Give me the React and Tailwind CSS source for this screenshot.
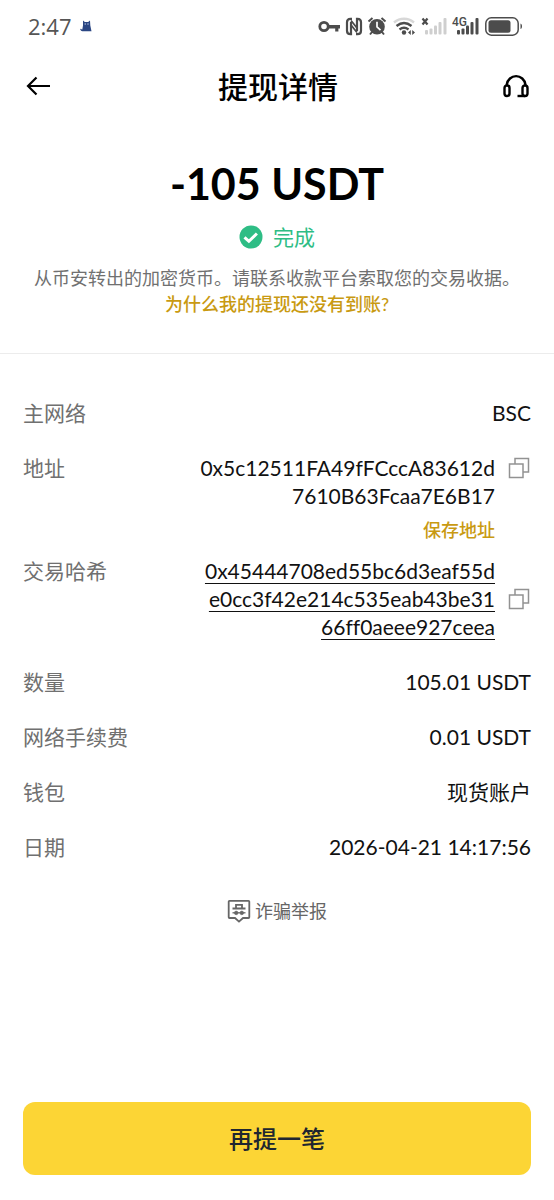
import { useState } from "react";

const details = {
	amount: "-105 USDT",
	network: "BSC",
	address: ["0x5c12511FA49fFCccA83612d", "7610B63Fcaa7E6B17"],
	hash: [
		"0x45444708ed55bc6d3eaf55d",
		"e0cc3f42e214c535eab43be31",
		"66ff0aeee927ceea",
	],
	quantity: "105.01 USDT",
	fee: "0.01 USDT",
	wallet: "现货账户",
	date: "2026-04-21 14:17:56",
};

function CatIcon() {
	return (
		<svg viewBox="0 0 12 12" className="w-3 h-3" fill="#2b4683">
			<path d="M3 .6 4.8 2h3.4L10 .6l.3 5 1.2 5.6H2.4C1.2 11 .3 10.3.2 9l.8-.2c.2.6.6.9 1.3.8L3 5.6z" />
			<circle cx="5.2" cy="4" r=".7" fill="#c5d2ee" />
			<circle cx="8" cy="4" r=".7" fill="#c5d2ee" />
		</svg>
	);
}

function StatusIcons() {
	return (
		<svg
			viewBox="0 0 206 24"
			className="w-[206px] h-6"
			fill="#4c4c4c"
			role="img"
			aria-label="4G"
		>
			{/* key */}
			<circle cx="6" cy="12.5" r="4.2" fill="none" stroke="#4c4c4c" strokeWidth="2.8" />
			<path d="M10 11h12v3.4h-1.6v3h-3.2v-3H10z" />
			{/* nfc */}
			<g fill="none" stroke="#4c4c4c">
				<path d="M34 4.8h-1.5q-3.5 0-3.5 3.5v8.4q0 3.5 3.5 3.5H33V8" strokeWidth="2.2" />
				<path d="M38 20.2h1.5q3.5 0 3.5-3.5V8.3q0-3.5-3.5-3.5H39V17" strokeWidth="2.2" />
				<path d="M33 6.5l6 7.5M33 11l6 7.5" strokeWidth="1.8" />
			</g>
			{/* alarm */}
			<circle cx="59" cy="12.8" r="7.8" />
			<path
				d="M50.5 7.5l4-3.4M67.5 7.5l-4-3.4M54 18l-2 2.5M64 18l2 2.5"
				stroke="#4c4c4c"
				strokeWidth="2"
				fill="none"
			/>
			<path d="M59 7.8v5.2l3.5 3.2" stroke="#fff" strokeWidth="1.7" fill="none" />
			{/* wifi */}
			<g fill="none" strokeWidth="2.4">
				<path d="M76 8.5c6-5 14-5 20 0" stroke="#d8d8d8" />
				<path d="M78.5 12c4.8-3.8 10.2-3.8 15 0M81.5 15.5c3-2.3 6-2.3 9 0" stroke="#4c4c4c" />
			</g>
			<circle cx="86" cy="18.5" r="2.2" />
			<path d="M92.8 16v5L90 18.5zM94.2 16v5l2.8-2.5z" />
			{/* sim without service */}
			<path d="M104.5 4.5l5 6M109.5 4.5l-5 6" stroke="#4c4c4c" strokeWidth="2.2" />
			<g fill="#cfcfcf">
				<rect x="107" y="16" width="3" height="4.5" rx="1" />
				<rect x="111.5" y="14.5" width="3" height="6" rx="1" />
				<rect x="116" y="11.5" width="3" height="9" rx="1" />
				<rect x="120.5" y="8" width="3" height="12.5" rx="1" />
				<rect x="125.5" y="4" width="3" height="16.5" rx="1" />
			</g>
			{/* 4G sim */}
			<text x="134" y="12" fontSize="12" fontWeight="500" fontFamily="Roboto, sans-serif">
				4G
			</text>
			<rect x="139" y="16" width="3" height="4.5" rx="1" />
			<rect x="143.5" y="14.5" width="3" height="6" rx="1" />
			<rect x="148" y="11.5" width="3" height="9" rx="1" />
			<rect x="152.5" y="8" width="3" height="12.5" rx="1" />
			<rect x="157.5" y="4" width="3" height="16.5" rx="1" />
			{/* battery */}
			<rect x="167.8" y="3.8" width="32.4" height="17.4" rx="5.5" fill="none" stroke="#4c4c4c" strokeWidth="1.5" />
			<rect x="170.5" y="6.3" width="22" height="12.4" rx="2.5" />
			<path d="M202.5 9.5c2 .6 2 5 0 5.6z" />
		</svg>
	);
}

function BackIcon() {
	return (
		<svg viewBox="0 0 24 24" className="w-6 h-6" fill="none" stroke="#000" strokeWidth="2.2">
			<path d="M24 12H2.5M10.5 3.5 2 12l8.5 8.5" />
		</svg>
	);
}

function SupportIcon() {
	return (
		<svg viewBox="0 0 28 28" className="w-7 h-7" fill="none" stroke="#000" strokeWidth="2.4">
			<path d="M4.8 14v-1.5a9.4 9.8 0 0 1 18.6 0V14" />
			<rect x="2.5" y="13.5" width="5" height="10.5" rx="2.4" />
			<rect x="20.5" y="13.5" width="5" height="10.5" rx="2.4" />
			<path d="M23 24h-7.5" />
		</svg>
	);
}

function CopyIcon() {
	return (
		<svg viewBox="0 0 22 22" className="w-[22px] h-[22px]" fill="none" stroke="#929292" strokeWidth="1.5">
			<path d="M1.5 7H15v13.5H1.5z" />
			<path d="M7 7V1.5h13.5V15H15" />
		</svg>
	);
}

function ReportIcon() {
	return (
		<svg viewBox="0 0 24 24" className="w-6 h-6" fill="none" stroke="#666" strokeWidth="1.8">
			<path d="M2.5 1.8h19q.8 0 .8.8v15.6q0 .8-.8.8H16l-4 3.6L8 19H2.5q-.8 0-.8-.8V2.6q0-.8.8-.8z" />
			<path d="M9 9V5.8h6V9M5.5 9.5h13" />
			<path d="M5.5 13.8h13" strokeWidth="1.3" />
			<circle cx="9.2" cy="13.9" r="1.8" fill="#666" strokeWidth=".6" />
			<circle cx="14.8" cy="13.9" r="1.8" fill="#666" strokeWidth=".6" />
		</svg>
	);
}

function Row({ label, children }) {
	return (
		<div className="flex justify-between">
			<dt className="text-[#707070]">{label}</dt>
			<dd className="text-right text-[#111]">{children}</dd>
		</div>
	);
}

function App() {
	const [copied, setCopied] = useState("");

	const copy = (lines) => {
		const text = lines.join("");
		navigator.clipboard?.writeText(text);
		setCopied(text);
	};

	return (
		<div
			lang="zh-CN"
			data-copied={copied || undefined}
			className="min-h-screen flex flex-col bg-white font-['Lato','Noto_Sans_CJK_SC',sans-serif] text-black [font-variant-ligatures:none]"
		>
			<div className="flex items-center justify-between h-13 pl-7 pr-[30px] text-[#555]">
				<div className="flex items-center gap-2">
					<span className="font-['Open_Sans',sans-serif] text-[22px]">2:47</span>
					<CatIcon />
				</div>
				<StatusIcons />
			</div>

			<header className="flex items-center justify-between h-17 pl-[26px] pr-6">
				<button type="button" aria-label="返回" className="w-8">
					<BackIcon />
				</button>
				<h1 className="text-[30px] font-medium">提现详情</h1>
				<button type="button" aria-label="客服" className="w-8 flex justify-end">
					<SupportIcon />
				</button>
			</header>

			<section className="flex flex-col items-center pt-10 pb-9 px-[23px] border-b border-[#ececec]">
				<p className="text-[43px] leading-12 font-bold">{details.amount}</p>
				<div className="flex items-center gap-2.5 mt-[15px] text-[21px] leading-7 text-[#2ebd85]">
					<svg viewBox="0 0 24 24" className="w-6 h-6">
						<circle cx="12" cy="12" r="11.5" fill="#2ebd85" />
						<path d="M5.5 12.3l4.4 4 8-7.8" fill="none" stroke="#fff" strokeWidth="3" />
					</svg>
					<span>完成</span>
				</div>
				<div className="mt-3.5 text-lg leading-[26px] text-center text-[#707070]">
					<p>从币安转出的加密货币。请联系收款平台索取您的交易收据。</p>
					<a href="#help" className="font-medium text-[#c99a12]">
						为什么我的提现还没有到账?
					</a>
				</div>
			</section>

			<dl className="flex flex-col gap-[27px] px-[23px] pt-[45px] text-[21px] leading-7">
				<Row label="主网络">{details.network}</Row>
				<div className="flex flex-col gap-[13px]">
					<Row label="地址">
						<div className="flex gap-3">
							<div>
								{details.address.map((line) => (
									<div key={line}>{line}</div>
								))}
								<button type="button" className="mt-1.5 text-lg leading-7 font-medium text-[#c99a12]">
									保存地址
								</button>
							</div>
							<button
								type="button"
								aria-label="复制地址"
								onClick={() => copy(details.address)}
								className="h-7 w-6 flex items-center justify-center"
							>
								<CopyIcon />
							</button>
						</div>
					</Row>
					<Row label="交易哈希">
						<div className="flex items-center gap-3">
							<a href="#hash" className="underline decoration-1 underline-offset-4">
								{details.hash.map((line) => (
									<span key={line} className="block">
										{line}
									</span>
								))}
							</a>
							<button
								type="button"
								aria-label="复制交易哈希"
								onClick={() => copy(details.hash)}
								className="h-7 w-6 flex items-center justify-center"
							>
								<CopyIcon />
							</button>
						</div>
					</Row>
				</div>
				<Row label="数量">{details.quantity}</Row>
				<Row label="网络手续费">{details.fee}</Row>
				<Row label="钱包">{details.wallet}</Row>
				<Row label="日期">{details.date}</Row>
			</dl>

			<button
				type="button"
				className="flex items-center gap-1 self-center mt-9 text-lg leading-7 text-[#666]"
			>
				<ReportIcon />
				诈骗举报
			</button>

			<footer className="mt-auto px-[23px] py-[25px]">
				<button
					type="button"
					className="w-full h-[73px] rounded-xl bg-[#fcd535] text-2xl font-medium text-[#202630]"
				>
					再提一笔
				</button>
			</footer>
		</div>
	);
}

export default App;
